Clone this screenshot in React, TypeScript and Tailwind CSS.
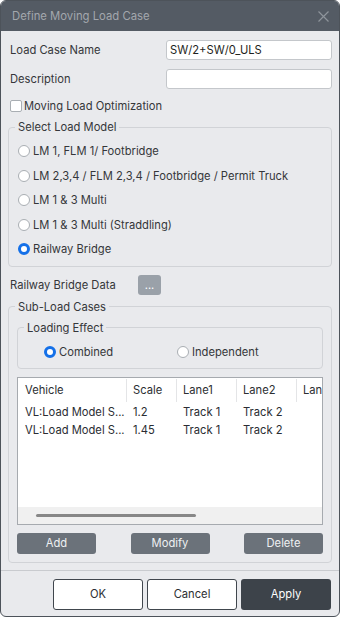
import React from 'react';

type RadioProps = { checked?: boolean; label: string };

function Radio({ checked, label }: RadioProps) {
  return (
    <div className="flex items-center gap-[3px]">
      <span
        className={`box-border shrink-0 w-[12px] h-[12px] rounded-full bg-white ${
          checked ? 'border-[3.5px] border-[#1470e8]' : 'border border-[#a9aeb3]'
        }`}
      />
      <span className="whitespace-nowrap">{label}</span>
    </div>
  );
}

const LOAD_MODELS = [
  'LM 1, FLM 1/ Footbridge',
  'LM 2,3,4 / FLM 2,3,4 / Footbridge / Permit Truck',
  'LM 1 & 3 Multi',
  'LM 1 & 3 Multi (Straddling)',
  'Railway Bridge',
];

const ROWS = [
  { vehicle: 'VL:Load Model S...', scale: '1.2', lane1: 'Track 1', lane2: 'Track 2' },
  { vehicle: 'VL:Load Model S...', scale: '1.45', lane1: 'Track 1', lane2: 'Track 2' },
];

export default function App() {
  return (
    <div className="w-[341px] h-[619px] bg-white overflow-hidden font-[Inter,'Liberation_Sans',sans-serif] text-[11.2px] leading-[16px] text-[#35373a]">
      <div className="w-[340px] h-[617px] flex flex-col bg-[#e9eaed] border border-[#4d535a] rounded-[6px] overflow-hidden">
        {/* title bar */}
        <div className="h-[30px] shrink-0 bg-[#545b64] flex items-center justify-between pl-[11px] pr-[10px]">
          <span className="text-[11.3px] text-[#a3a7ad]">Define Moving Load Case</span>
          <svg width="11" height="11" viewBox="0 0 11 11" className="text-[#8e949b]">
            <path d="M0.5 0.5 L10.5 10.5 M10.5 0.5 L0.5 10.5" stroke="currentColor" strokeWidth="1.2" />
          </svg>
        </div>

        <div className="pl-[7px] pr-[7px]">
          <div className="mt-[9px] h-[20px] flex items-center justify-between">
            <span className="pl-[2px]">Load Case Name</span>
            <div className="w-[166px] h-[20px] bg-white border border-[#c4c7cb] rounded-[3px] pl-[3px] flex items-center text-[#1e1f21]">
              SW/2+SW/0_ULS
            </div>
          </div>
          <div className="mt-[9px] h-[20px] flex items-center justify-between">
            <span className="pl-[2px]">Description</span>
            <div className="w-[166px] h-[20px] bg-white border border-[#c4c7cb] rounded-[3px]" />
          </div>
          <div className="mt-[10px] h-[14px] flex items-center gap-[2px] pl-[2px]">
            <span className="box-border w-[12px] h-[12px] bg-white border border-[#a9aeb3] rounded-[2px]" />
            <span>Moving Load Optimization</span>
          </div>

          <fieldset className="min-w-0 mt-[6px] border border-[#d1d3d7] rounded-[4px] pl-[6px] pr-[6px] pt-[4px] pb-[4px]">
            <legend className="px-[3px] leading-[16px]">Select Load Model</legend>
            <div className="pl-[3px]">
              {LOAD_MODELS.map((m, i) => (
                <div key={m} className="h-[24.5px] flex items-center">
                  <Radio label={m} checked={i === LOAD_MODELS.length - 1} />
                </div>
              ))}
            </div>
          </fieldset>

          <div className="mt-[8px] h-[20px] flex items-center">
            <span className="w-[130px] pl-[2px]">Railway Bridge Data</span>
            <button
              type="button"
              className="w-[23px] h-[20px] rounded-[3px] bg-[#9aa1a9] text-white text-[11px] leading-[12px] flex items-center justify-center"
            >
              ...
            </button>
          </div>

          <fieldset className="min-w-0 mt-[4px] border border-[#d1d3d7] rounded-[4px] pl-[6px] pr-[8px] pt-[5px] pb-[8px]">
            <legend className="px-[3px] leading-[16px]">Sub-Load Cases</legend>
            <div className="pl-[2px]">
              <fieldset className="min-w-0 border border-[#d1d3d7] rounded-[4px] pl-[6px] pt-[8px] pb-[8px]">
                <legend className="px-[3px] leading-[16px]">Loading Effect</legend>
                <div className="h-[16px] flex items-center pl-[20px]">
                  <div className="w-[133px]">
                    <Radio label="Combined" checked />
                  </div>
                  <Radio label="Independent" />
                </div>
              </fieldset>

              <div className="mt-[8px] h-[148px] min-w-0 bg-white border border-[#a6aaaf] flex flex-col overflow-hidden">
                <div className="h-[25px] flex items-stretch whitespace-nowrap text-[#2d2f33]">
                  <div className="w-[109px] shrink-0 pl-[7px] flex items-center border-r border-[#e4e5e7] my-[1px]">Vehicle</div>
                  <div className="w-[50px] shrink-0 pl-[6px] flex items-center border-r border-[#e4e5e7] my-[1px]">Scale</div>
                  <div className="w-[60px] shrink-0 pl-[6px] flex items-center border-r border-[#e4e5e7] my-[1px]">Lane1</div>
                  <div className="w-[60px] shrink-0 pl-[6px] flex items-center border-r border-[#e4e5e7] my-[1px]">Lane2</div>
                  <div className="w-[60px] shrink-0 pl-[6px] flex items-center my-[1px]">Lane3</div>
                </div>
                {ROWS.map((r) => (
                  <div key={r.scale} className="h-[18px] flex items-center whitespace-nowrap text-[#2b2d33]">
                    <div className="w-[109px] shrink-0 pl-[7px]">{r.vehicle}</div>
                    <div className="w-[50px] shrink-0 pl-[6px]">{r.scale}</div>
                    <div className="w-[60px] shrink-0 pl-[6px]">{r.lane1}</div>
                    <div className="w-[60px] shrink-0 pl-[6px]">{r.lane2}</div>
                  </div>
                ))}
                <div className="flex-1" />
                <div className="h-[17px] shrink-0 bg-[#f0f0f0] flex items-center">
                  <div className="ml-[18px] w-[160px] h-[3px] rounded-full bg-[#878787]" />
                </div>
              </div>

              <div className="mt-[8px] h-[21px] flex justify-between">
                {['Add', 'Modify', 'Delete'].map((b) => (
                  <button
                    key={b}
                    type="button"
                    className="w-[79px] h-[21px] rounded-[3px] bg-[#6b727a] text-[#eef0f2] flex items-center justify-center"
                  >
                    {b}
                  </button>
                ))}
              </div>
            </div>
          </fieldset>
        </div>

        <div className="mt-[7px] h-px bg-[#c9cbcf]" />

        <div className="mt-[8px] h-[31px] flex justify-end gap-[4px] pr-[8px]">
          <button
            type="button"
            className="w-[90px] h-[31px] rounded-[3px] bg-white border border-[#40464d] text-[#2d2f33]"
          >
            OK
          </button>
          <button
            type="button"
            className="w-[90px] h-[31px] rounded-[3px] bg-white border border-[#40464d] text-[#2d2f33]"
          >
            Cancel
          </button>
          <button type="button" className="w-[90px] h-[31px] rounded-[3px] bg-[#3d434a] text-white">
            Apply
          </button>
        </div>
      </div>
    </div>
  );
}
